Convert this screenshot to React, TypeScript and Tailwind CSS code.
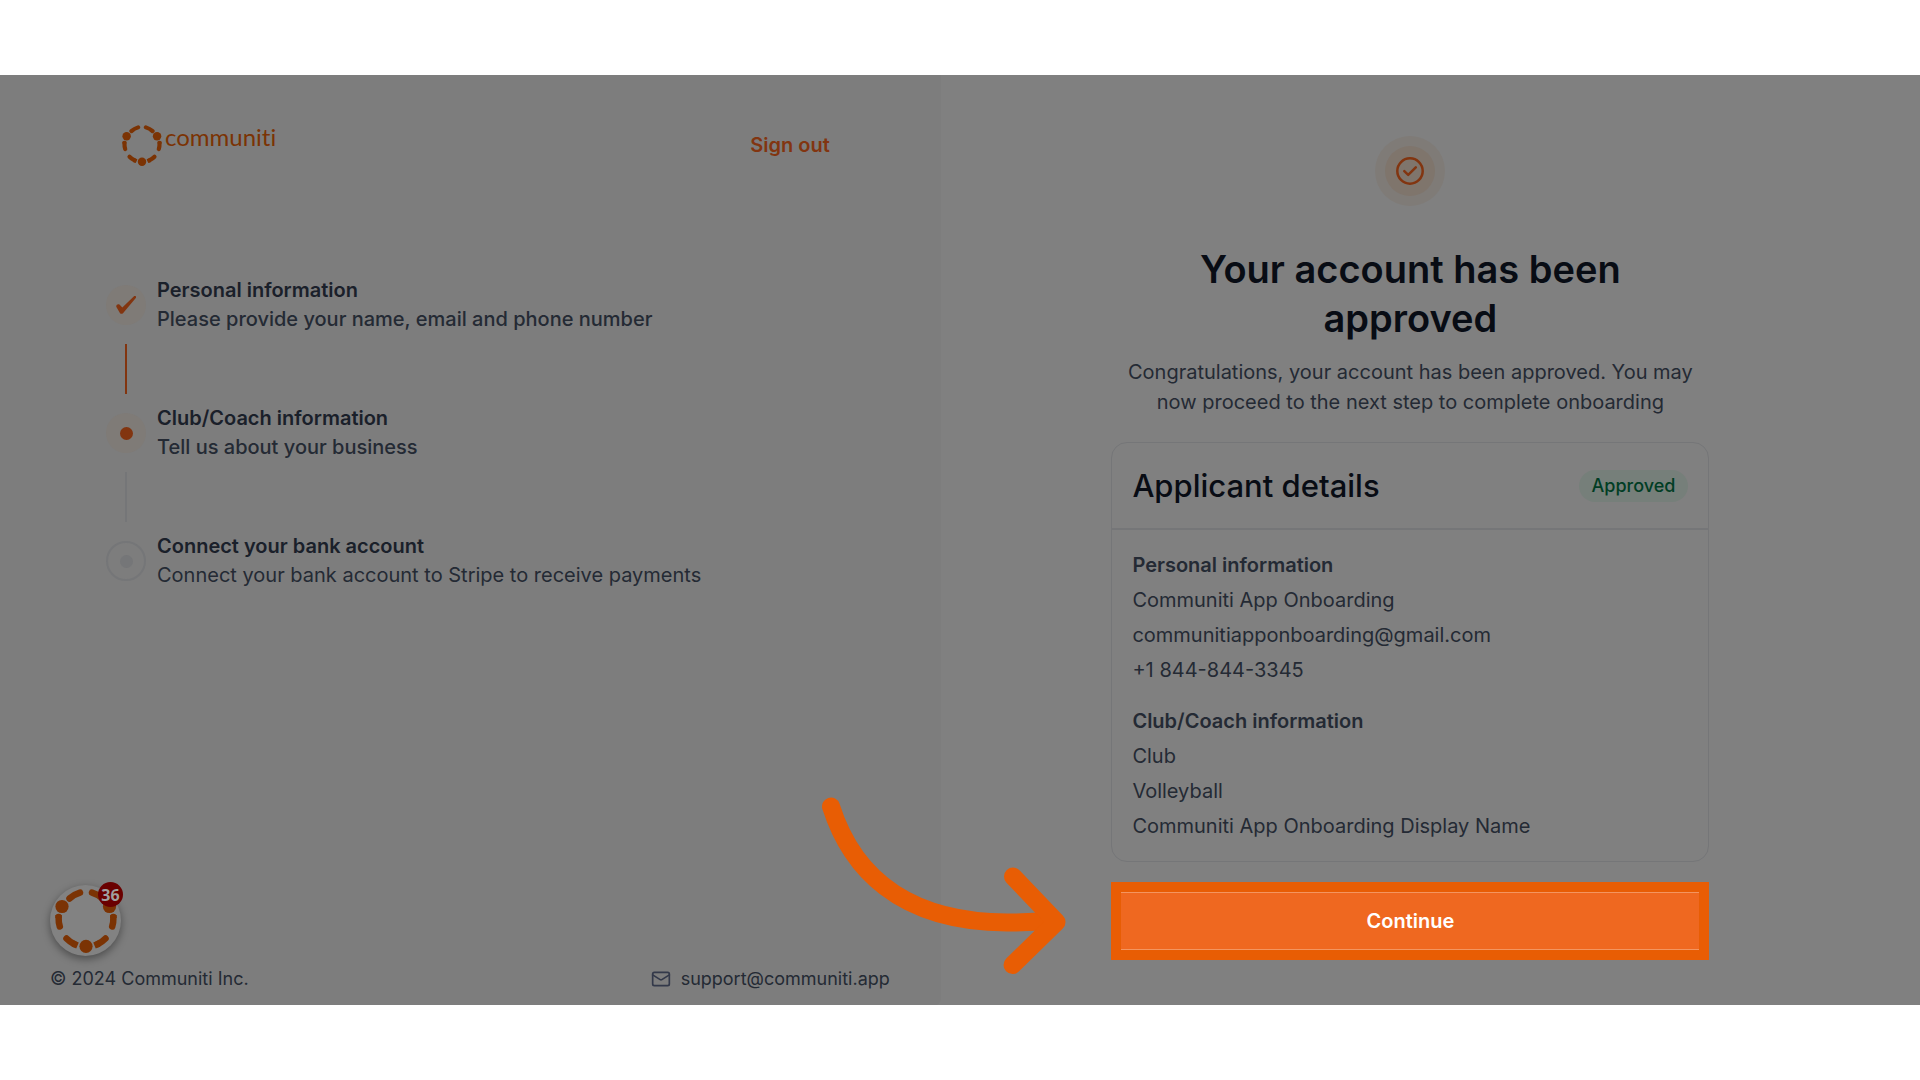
import React from 'react'
import { Mail } from 'lucide-react'

const steps = [
  {
    title: 'Personal information',
    description: 'Please provide your name, email and phone number',
    status: 'done',
  },
  {
    title: 'Club/Coach information',
    description: 'Tell us about your business',
    status: 'current',
  },
  {
    title: 'Connect your bank account',
    description: 'Connect your bank account to Stripe to receive payments',
    status: 'upcoming',
  },
]

const details = [
  {
    title: 'Personal information',
    lines: ['Communiti App Onboarding', 'communitiapponboarding@gmail.com', '+1 844-844-3345'],
  },
  {
    title: 'Club/Coach information',
    lines: ['Club', 'Volleyball', 'Communiti App Onboarding Display Name'],
  },
]

const Ring = ({ className }: { className: string }) => (
  <svg viewBox="0 0 62 64" className={className} fill="none" stroke="currentColor" strokeWidth="6.5" aria-hidden="true">
    <g fill="currentColor" stroke="none">
      <circle cx="7" cy="17.5" r="6.6" />
      <circle cx="54.5" cy="17.5" r="6.6" />
      <circle cx="31" cy="57.3" r="6.6" />
    </g>
    <path d="M14.5 9.5Q19 5.500 25 3.700" strokeLinecap="round" />
    <path d="M37 3.700Q43 5.500 47.500 9.500" strokeLinecap="round" />
    <path d="M3.600 26V29" />
    <path d="M3.600 28Q3.500 34 4.800 37.500" strokeLinecap="round" />
    <path d="M58.400 26V29" />
    <path d="M58.400 28Q58.500 34 57.200 37.500" strokeLinecap="round" />
    <path d="M11.500 49.500Q15 53 19 55" strokeLinecap="round" />
    <path d="M18 54.600L22.500 56.500" />
    <path d="M50.500 49.500Q47 53 43 55" strokeLinecap="round" />
    <path d="M44 54.600L39.500 56.500" />
  </svg>
)

const StepIcon = ({ status }: { status: string }) => {
  if (status === 'done') {
    return (
      <span className="flex size-10 items-center justify-center rounded-full bg-[#7f7b77] text-[#823510]">
        <svg viewBox="0 0 20 18" className="h-[18px] w-5" fill="currentColor" aria-hidden="true">
          <path d="M18 .2 6.300 11.400 3.700 8.800C2.300 7.500-.4 8.800.4 11L3.900 16.900C4.700 18 6.100 18.100 7.200 16.900L20 1.800C20.800.6 19.200-.8 18 .2Z" />
        </svg>
      </span>
    )
  }
  if (status === 'current') {
    return (
      <span className="flex size-10 items-center justify-center rounded-full bg-[#7f7b77]">
        <span className="size-[13px] rounded-full bg-[#823510]" />
      </span>
    )
  }
  return (
    <span className="flex size-10 items-center justify-center rounded-full border-2 border-[#757678]">
      <span className="size-[13px] rounded-full bg-[#757678]" />
    </span>
  )
}

const Sidebar = () => (
  <aside className="flex w-[49%] flex-col rounded-br-md bg-[#7d7d7d]">
    <header className="flex items-start justify-between pt-[50px] pr-[111px] pl-[122px]">
      <div className="flex items-start text-[#7b3304]">
        <Ring className="h-[41px] w-10" />
        <span className="ml-[3px] font-[Lato,sans-serif] text-[24px] leading-[24px] [font-variant-ligatures:none]">
          communiti
        </span>
      </div>
      <button className="pt-[6px] text-[20px] leading-[29px] font-semibold text-[#823510]">Sign out</button>
    </header>

    <ol className="mt-[110px] pl-[106px]">
      {steps.map((step, i) => (
        <li key={step.title}>
          <div className="flex items-center gap-[11px]">
            <StepIcon status={step.status} />
            <div className="text-[20px] leading-[29px]">
              <p className="font-semibold text-[#1a202a]">{step.title}</p>
              <p className={step.status === 'upcoming' ? 'text-[#242a34]' : 'font-medium text-[#242a34]'}>
                {step.description}
              </p>
            </div>
          </div>
          {i < steps.length - 1 && (
            <div className={`my-[10px] ml-[19px] h-[50px] w-[2px] ${i === 0 ? 'bg-[#823510]' : 'bg-[#757678]'}`} />
          )}
        </li>
      ))}
    </ol>

    <div className="mt-auto pl-[50px]">
      <button
        aria-label="Open messages, 36 unread"
        className="relative flex size-[71px] items-center justify-center rounded-full bg-[#828282] text-[#7b3304] shadow-[0_3px_8px_rgba(0,0,0,0.4)]"
      >
        <Ring className="h-[64px] w-[62px]" />
        <span className="absolute -top-[3px] -right-[2px] flex size-[25px] items-center justify-center rounded-full bg-[#6a0000] font-['Open_Sans',sans-serif] text-[16px] font-bold text-[#a0a0a0]">
          36
        </span>
      </button>
    </div>
    <footer className="flex items-center justify-between pt-[9px] pr-[51px] pb-[12px] pl-[50px] text-[18px] leading-[28px] text-[#242a34]">
      <p>© 2024 Communiti Inc.</p>
      <a href="mailto:support@communiti.app" className="flex items-center gap-[10px]">
        <Mail className="size-5 text-[#33394a]" strokeWidth={2} />
        support@communiti.app
      </a>
    </footer>
  </aside>
)

const ApplicantCard = () => (
  <section className="mt-[25px] rounded-2xl border border-[#757678]">
    <div className="flex items-center justify-between border-b-2 border-[#757678] px-5 py-[20px]">
      <h2 className="text-[31px] leading-[45px] font-medium text-[#080c14]">Applicant details</h2>
      <span className="rounded-full bg-[#767f7a] px-[13px] text-[18px] leading-[32px] font-medium text-[#013d24]">
        Approved
      </span>
    </div>
    <div className="flex flex-col gap-[21px] p-5 text-[20px] leading-[30px] text-[#242a34]">
      {details.map((group) => (
        <div key={group.title} className="flex flex-col gap-[5px]">
          <h3 className="font-semibold">{group.title}</h3>
          {group.lines.map((line) => (
            <p key={line}>{line}</p>
          ))}
        </div>
      ))}
    </div>
  </section>
)

const App = () => {
  return (
    <div className="flex min-h-screen flex-col bg-white py-[75px] font-[Inter,sans-serif]">
      <div className="flex flex-1 bg-[#808080]">
        <Sidebar />
        <main className="flex flex-1 justify-center pt-[61px] pr-10">
          <div className="w-[598px]">
            <div className="mx-auto flex size-[70px] items-center justify-center rounded-full bg-[#7f7b77]">
              <div className="flex size-[50px] items-center justify-center rounded-full bg-[#7f756c]">
                <svg viewBox="0 0 28 28" className="size-7 text-[#823510]" fill="none" stroke="currentColor" strokeWidth="2.5" strokeLinecap="round" strokeLinejoin="round" aria-hidden="true">
                  <circle cx="14" cy="14" r="12.7" />
                  <path d="M8.300 14.200 12.200 17.900 19.800 10.300" />
                </svg>
              </div>
            </div>
            <h1 className="mt-[39px] text-center text-[38px] leading-[49px] font-semibold text-[#080c14]">
              Your account has been approved
            </h1>
            <p className="mt-[14px] text-center text-[20px] leading-[30px] text-[#242a34]">
              Congratulations, your account has been approved. You may now proceed to the next step to complete onboarding
            </p>
            <ApplicantCard />
            <div className="relative mt-[20px]">
              <button className="block w-full border-[10px] border-[#e85d04] bg-[#ef6820] text-[20px] font-semibold text-white">
                <span className="block border-y border-[#f4955f] py-[13px] leading-[30px]">Continue</span>
              </button>
              <svg viewBox="820 795 248 182" className="absolute right-full bottom-[-17px] mr-[43px] h-[182px] w-[248px]" fill="none" stroke="#e85d04" strokeWidth="18" strokeLinecap="round" strokeLinejoin="round" aria-hidden="true">
                <path d="M831 806.500C850 866 897 922 1007 922.500Q1030 922.500 1052 920.500" />
                <path d="M1013 876.500 1056.500 922 1012.500 965" />
              </svg>
            </div>
          </div>
        </main>
      </div>
    </div>
  )
}

export default App
